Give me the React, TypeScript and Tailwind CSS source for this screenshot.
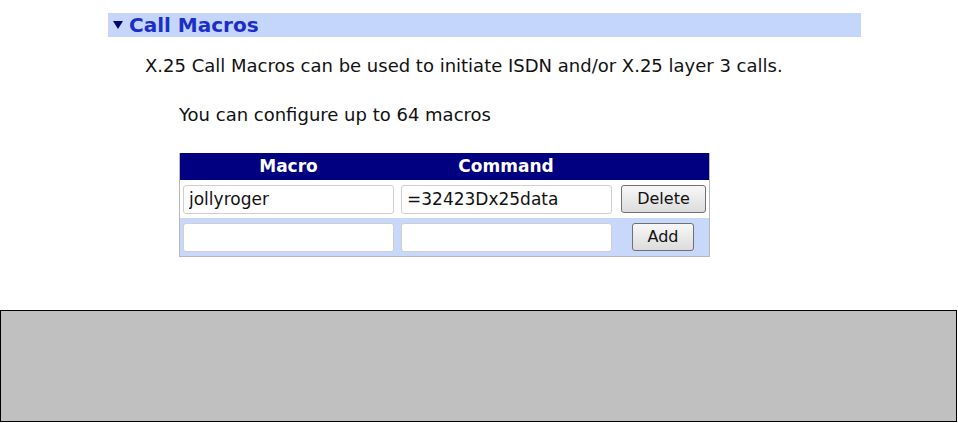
const font = { fontFamily: '"DejaVu Sans", Verdana, sans-serif' };

const Field = ({ value }: { value?: string }) => (
  <input
    readOnly
    value={value ?? ""}
    className="w-[211px] h-[29px] border border-[#cfcfcf] rounded-[3px] bg-white px-[5px] text-[17px] text-[#111] outline-none"
    style={font}
  />
);

const Btn = ({ label, w }: { label: string; w: string }) => (
  <button
    className={`${w} h-[28px] border border-[#707070] rounded-[3px] bg-gradient-to-b from-[#f8f8f8] to-[#dcdcdc] text-[16px] text-[#111] leading-none`}
    style={font}
  >
    {label}
  </button>
);

export default function App() {
  return (
    <div className="w-[958px] h-[423px] bg-white relative overflow-hidden" style={font}>
      <div className="pt-[13px] pl-[108px]">
        <div className="w-[753px] h-[24px] bg-[#c4d6fc] flex items-center pl-[5px] gap-[6px]">
          <svg width="10" height="8" viewBox="0 0 10 8">
            <polygon points="0,0 10,0 5,8" fill="#000070" />
          </svg>
          <span className="text-[20px] font-bold text-[#1c2ec8] leading-none">Call Macros</span>
        </div>
      </div>

      <p className="ml-[145px] mt-[19px] text-[18px] text-[#111] leading-[20px]">
        X.25 Call Macros can be used to initiate ISDN and/or X.25 layer 3 calls.
      </p>

      <p className="ml-[179px] mt-[29px] text-[18px] text-[#111] leading-[20px]">
        You can configure up to 64 macros
      </p>

      <div className="ml-[179px] mt-[28px] w-[531px] border-l border-r border-b border-[#b8b8b8]">
        <div className="h-[27px] bg-[#000080] flex items-center text-white font-bold text-[17px] leading-none">
          <div className="w-[217px] text-center">Macro</div>
          <div className="w-[218px] text-center">Command</div>
        </div>
        <div className="h-[38px] bg-white flex items-center pl-[3px] gap-[7px]">
          <Field value="jollyroger" />
          <Field value="=32423Dx25data" />
          <div className="ml-[2px]">
            <Btn label="Delete" w="w-[85px]" />
          </div>
        </div>
        <div className="h-[38px] bg-[#c8d8fa] flex items-center pl-[3px] gap-[7px]">
          <Field />
          <Field />
          <div className="ml-[13px]">
            <Btn label="Add" w="w-[62px]" />
          </div>
        </div>
      </div>

      <div className="absolute left-0 top-[310px] w-[957px] h-[112px] bg-[#c0c0c0] border border-black" />
    </div>
  );
}
